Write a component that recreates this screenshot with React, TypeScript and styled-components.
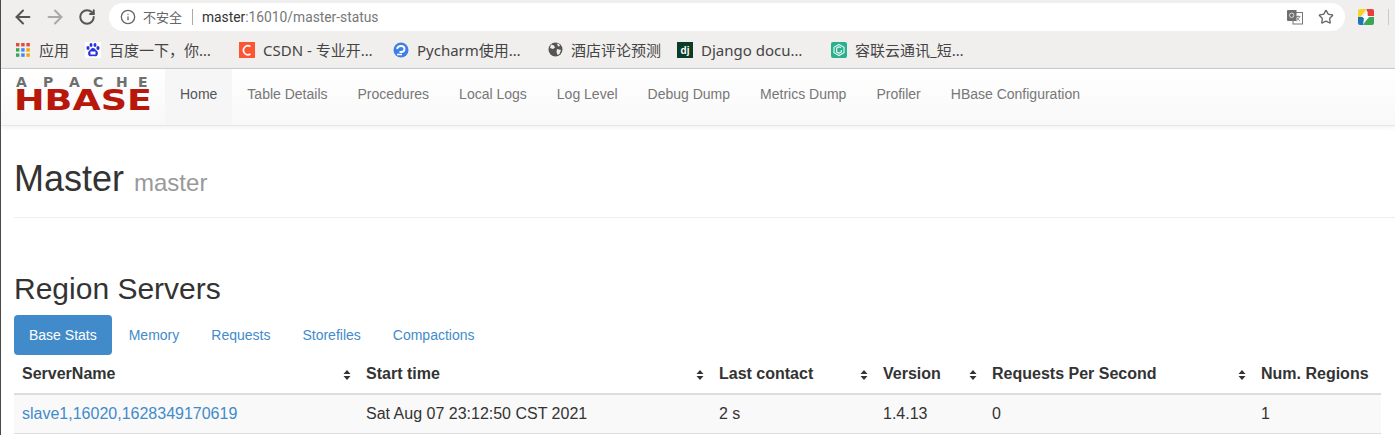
import { ArrowLeft, ArrowRight, Info, RotateCw, Star } from "lucide-react";
import styled, { createGlobalStyle } from "styled-components";

const GlobalStyle = createGlobalStyle`
  html, body {
    margin: 0;
    padding: 0;
    background: #fff;
    overflow: hidden;
  }
  * {
    box-sizing: border-box;
  }
`;

const Page = styled.div`
  width: 1395px;
  height: 435px;
  overflow: hidden;
  border-left: 1px solid #4a4a4a;
  font-family: "Liberation Sans", Arial, sans-serif;
  color: #333;
`;

const Toolbar = styled.div`
  height: 34px;
  padding: 3px 0 3px 6px;
  background: #f0efee;
  display: flex;
  align-items: center;
`;

const NavButton = styled.div<{ $muted?: boolean }>`
  width: 32px;
  display: flex;
  justify-content: center;
  color: ${props => props.$muted ? "#a9a9a9" : "#555"};
`;

const Omnibox = styled.div`
  width: 1236px;
  height: 28px;
  margin-left: 6px;
  padding: 0 11px;
  border-radius: 14px;
  background: #fff;
  display: flex;
  align-items: center;
  font-family: "Noto Sans", "Noto Sans CJK SC", sans-serif;
  font-size: 13px;
`;

const NotSecure = styled.span`
  margin-left: 7px;
  padding-right: 10px;
  border-right: 1px solid #aaa;
  line-height: 16px;
  color: #666;
  font-family: "Noto Sans CJK SC", sans-serif;
`;

const Url = styled.span`
  margin-left: 9px;
  color: #777;
  font-family: "Roboto", sans-serif;
  font-size: 13.8px;

  b {
    font-weight: 400;
    color: #333;
  }
`;

const OmniActions = styled.div`
  margin-left: auto;
  display: flex;
  align-items: center;
  gap: 15px;
  color: #666;
`;

const Extension = styled.div`
  margin-left: 13px;
  display: flex;
`;

const ToolbarDivider = styled.div`
  width: 1px;
  height: 16px;
  margin-left: 14px;
  background: #c9c9c9;
`;

const BookmarkBar = styled.div`
  height: 35px;
  padding: 0 0 3px 15px;
  background: #f0efee;
  border-bottom: 1px solid #cfcfcf;
  display: flex;
  align-items: center;
  font-family: "Noto Sans", "Noto Sans CJK SC", sans-serif;
  font-size: 15px;
  color: #444;
`;

const Bookmark = styled.div<{ $width: number }>`
  width: ${props => props.$width}px;
  display: flex;
  align-items: center;
  gap: 8px;
  white-space: nowrap;
`;

const NavBar = styled.nav`
  height: 57px;
  background: linear-gradient(to bottom, #fff 0%, #f8f8f8 100%);
  border-bottom: 1px solid #e7e7e7;
  box-shadow: 0 1px 5px rgba(0, 0, 0, 0.07);
  display: flex;
  font-size: 14px;
`;

const Brand = styled.div`
  width: 164px;
  padding: 4px 0 0 13px;
`;

const NavItem = styled.a<{ $active?: boolean }>`
  padding: 0 15px;
  line-height: 50px;
  height: 56px;
  color: ${props => props.$active ? "#555" : "#777"};
  background: ${props => props.$active ? "#f6f6f6" : "transparent"};
`;

const Content = styled.main`
  padding: 0 13px;
`;

const PageHeader = styled.div`
  height: 92px;
  margin-right: -13px;
  padding-top: 33px;
  border-bottom: 1px solid #eee;
`;

const Title = styled.h1`
  margin: 0;
  font-size: 36px;
  font-weight: 500;
  line-height: 40px;
  color: #333;

  small {
    font-size: 24px;
    font-weight: 400;
    color: #999;
  }
`;

const SectionTitle = styled.h2`
  margin: 54px 0 10px;
  font-size: 30px;
  font-weight: 500;
  line-height: 33px;
  color: #333;
`;

const Tabs = styled.ul`
  margin: 0;
  padding: 0;
  list-style: none;
  display: flex;
  gap: 2px;
`;

const Tab = styled.li<{ $active?: boolean }>`
  padding: 10px 15px;
  line-height: 20px;
  font-size: 14px;
  border-radius: 4px;
  color: ${props => props.$active ? "#fff" : "#428bca"};
  background: ${props => props.$active ? "#428bca" : "transparent"};
`;

const Table = styled.table`
  width: 1367px;
  border-collapse: collapse;
  table-layout: fixed;
  font-size: 16px;
`;

const HeadCell = styled.th`
  position: relative;
  height: 39px;
  padding: 8px;
  text-align: left;
  font-weight: 700;
  line-height: 20px;
  border-bottom: 2px solid #ddd;
`;

const SortIcon = styled.svg`
  position: absolute;
  right: 7px;
  top: 15px;
`;

const Row = styled.tr`
  background: #f9f9f9;
`;

const Cell = styled.td`
  height: 39px;
  padding: 8px;
  line-height: 20px;
  border-bottom: 1px solid #ddd;
`;

const ServerLink = styled.a`
  color: #428bca;
`;

const columns = [
  { name: "ServerName", width: 344, sortable: true },
  { name: "Start time", width: 353, sortable: true },
  { name: "Last contact", width: 164, sortable: true },
  { name: "Version", width: 109, sortable: true },
  { name: "Requests Per Second", width: 269, sortable: true },
  { name: "Num. Regions", width: 128, sortable: false },
];

const tabs = ["Base Stats", "Memory", "Requests", "Storefiles", "Compactions"];

const navLinks = [
  "Home",
  "Table Details",
  "Procedures",
  "Local Logs",
  "Log Level",
  "Debug Dump",
  "Metrics Dump",
  "Profiler",
  "HBase Configuration",
];

const AppsIcon = () => {
  const colors = ["#e04a3f", "#e04a3f", "#e04a3f", "#3aa757", "#4285f4", "#f4a400", "#3aa757", "#4285f4", "#f4a400"];
  return (
    <svg width="15" height="14" viewBox="0 0 15 14">
      {colors.map((color, idx) => (
        <rect key={idx} x={(idx % 3) * 5.2} y={Math.floor(idx / 3) * 5.2} width="3.4" height="3.4" fill={color} />
      ))}
    </svg>
  );
};

const BaiduIcon = () => (
  <svg width="16" height="16" viewBox="0 0 16 16">
    <rect width="16" height="16" fill="#fff" />
    <g fill="#2932e1">
      <ellipse cx="3" cy="6" rx="1.6" ry="2" />
      <ellipse cx="6" cy="3" rx="1.5" ry="2" />
      <ellipse cx="10" cy="3" rx="1.5" ry="2" />
      <ellipse cx="13" cy="6" rx="1.6" ry="2" />
      <path d="M8 6c2 0 2.500 2 4 3 1.500 1.200 1 5-1 5.300-1 .1-2-.3-3-.3s-2 .4-3 .3c-2-.3-2.500-4-1-5.300 1.500-1 2-3 4-3z" />
    </g>
    <rect x="5.500" y="9.500" width="5" height="3" fill="#fff" />
  </svg>
);

const CsdnIcon = () => (
  <svg width="16" height="16" viewBox="0 0 16 16">
    <rect width="16" height="16" fill="#fc5531" />
    <path d="M11.500 4.500A4.500 4.500 0 1 0 11.500 12" fill="none" stroke="#fff" strokeWidth="1.700" />
  </svg>
);

const PycharmIcon = () => (
  <svg width="16" height="16" viewBox="0 0 16 16">
    <circle cx="8" cy="8" r="7.500" fill="#3d7fe6" />
    <path d="M4 7c.5-2 2-3 4-3 2.200 0 3.500 1.300 3.500 3s-1.500 3-3.500 3H6.500" fill="none" stroke="#fff" strokeWidth="1.800" />
    <path d="M4 12.500h5" stroke="#fff" strokeWidth="1.500" />
  </svg>
);

const GlobeIcon = () => (
  <svg width="15" height="15" viewBox="0 0 15 15">
    <circle cx="7.500" cy="7.500" r="7" fill="#555" />
    <path d="M3 2.500l3 1 1 2-2 1.500-3-1zM9 7l4 1-1.500 4-2 1-1-3zM9 1.500l2 .5 1 2-2 .5z" fill="#f0efee" />
  </svg>
);

const DjangoIcon = () => (
  <svg width="16" height="16" viewBox="0 0 16 16">
    <rect width="16" height="16" fill="#0c3c26" />
    <text x="8" y="11.500" textAnchor="middle" fontFamily="Liberation Sans" fontWeight="700" fontSize="10" fill="#fff">dj</text>
  </svg>
);

const RonglianIcon = () => (
  <svg width="16" height="16" viewBox="0 0 16 16">
    <rect width="16" height="16" rx="2" fill="#2bb08f" />
    <path d="M8 2.500l5 2.800v5.400l-5 2.800-5-2.800V5.300z" fill="none" stroke="#dff5ef" strokeWidth="1.200" />
    <path d="M10 5.800L8 4.800 5.600 6.200v3.600L8 11.200l2.400-1.400V8" fill="none" stroke="#dff5ef" strokeWidth="1.200" />
  </svg>
);

const TranslateIcon = () => (
  <svg width="16" height="16" viewBox="0 0 16 16">
    <rect x="6" y="3.500" width="9.500" height="11.500" fill="#fff" stroke="#777" />
    <path d="M8.500 7.500h5M11 6.500v1M9.500 7.500c.5 2 2 3.500 3.500 4.500M12.500 7.500c-.5 2-1.800 3.500-3 4.500" fill="none" stroke="#777" strokeWidth=".8" />
    <path d="M0 2a1 1 0 0 1 1-1h8.500v11H1a1 1 0 0 1-1-1z" fill="#6f6f6f" />
    <circle cx="4.700" cy="6.300" r="2.200" fill="none" stroke="#ddd" strokeWidth="1" />
  </svg>
);

const BoltIcon = () => (
  <svg width="16" height="16" viewBox="0 0 16 16">
    <path d="M2 0h6.500L2.500 8H0V2a2 2 0 0 1 2-2z" fill="#f5d327" />
    <path d="M8.500 0H14a2 2 0 0 1 2 2v5H10z" fill="#e5413c" />
    <path d="M0 8h6l-1 8H2a2 2 0 0 1-2-2z" fill="#1b75bb" />
    <path d="M10 8h6v6a2 2 0 0 1-2 2H5z" fill="#3aa757" />
    <path d="M10 2L4.500 9H8l-2 5 6-7H8.500z" fill="#fff" />
  </svg>
);

const HBaseLogo = () => (
  <svg width="140" height="48" viewBox="0 0 140 48">
    <text x="2 29 55 79 102 124" y="14" fontFamily="DejaVu Sans" fontWeight="700" fontSize="14" fill="#6f6f6f">APACHE</text>
    <text x="0" y="37" textLength="138" lengthAdjust="spacingAndGlyphs" fontFamily="DejaVu Sans" fontWeight="700" fontSize="29" fill="#b8170c">HBASE</text>
  </svg>
);

const SortArrows = () => (
  <SortIcon width="8" height="10" viewBox="0 0 8 10">
    <path d="M4 0l3.500 4h-7zM4 10l3.500-4h-7z" fill="#333" />
  </SortIcon>
);

export default function App() {
  return (
    <Page>
      <GlobalStyle />
      <Toolbar>
        <NavButton><ArrowLeft size={22} strokeWidth={2.2} /></NavButton>
        <NavButton $muted><ArrowRight size={22} strokeWidth={2.2} /></NavButton>
        <NavButton><RotateCw size={18} strokeWidth={2.6} /></NavButton>
        <Omnibox>
          <Info size={16} color="#666" />
          <NotSecure>不安全</NotSecure>
          <Url><b>master</b>:16010/master-status</Url>
          <OmniActions>
            <TranslateIcon />
            <Star size={16} />
          </OmniActions>
        </Omnibox>
        <Extension><BoltIcon /></Extension>
        <ToolbarDivider />
      </Toolbar>

      <BookmarkBar>
        <Bookmark $width={69}><AppsIcon />应用</Bookmark>
        <Bookmark $width={154}><BaiduIcon />百度一下，你…</Bookmark>
        <Bookmark $width={154}><CsdnIcon />CSDN - 专业开…</Bookmark>
        <Bookmark $width={155}><PycharmIcon />Pycharm使用…</Bookmark>
        <Bookmark $width={129}><GlobeIcon />酒店评论预测</Bookmark>
        <Bookmark $width={154}><DjangoIcon />Django docu…</Bookmark>
        <Bookmark $width={150}><RonglianIcon />容联云通讯_短…</Bookmark>
      </BookmarkBar>

      <NavBar>
        <Brand><HBaseLogo /></Brand>
        {navLinks.map((link, idx) => (
          <NavItem key={link} $active={idx === 0}>{link}</NavItem>
        ))}
      </NavBar>

      <Content>
        <PageHeader>
          <Title>Master <small>master</small></Title>
        </PageHeader>
        <SectionTitle>Region Servers</SectionTitle>
        <Tabs>
          {tabs.map((tab, idx) => (
            <Tab key={tab} $active={idx === 0}>{tab}</Tab>
          ))}
        </Tabs>
        <Table>
          <colgroup>
            {columns.map(col => <col key={col.name} width={col.width} />)}
          </colgroup>
          <thead>
            <tr>
              {columns.map(col => (
                <HeadCell key={col.name}>{col.name}{col.sortable && <SortArrows />}</HeadCell>
              ))}
            </tr>
          </thead>
          <tbody>
            <Row>
              <Cell><ServerLink>slave1,16020,1628349170619</ServerLink></Cell>
              <Cell>Sat Aug 07 23:12:50 CST 2021</Cell>
              <Cell>2 s</Cell>
              <Cell>1.4.13</Cell>
              <Cell>0</Cell>
              <Cell>1</Cell>
            </Row>
          </tbody>
        </Table>
      </Content>
    </Page>
  );
}
